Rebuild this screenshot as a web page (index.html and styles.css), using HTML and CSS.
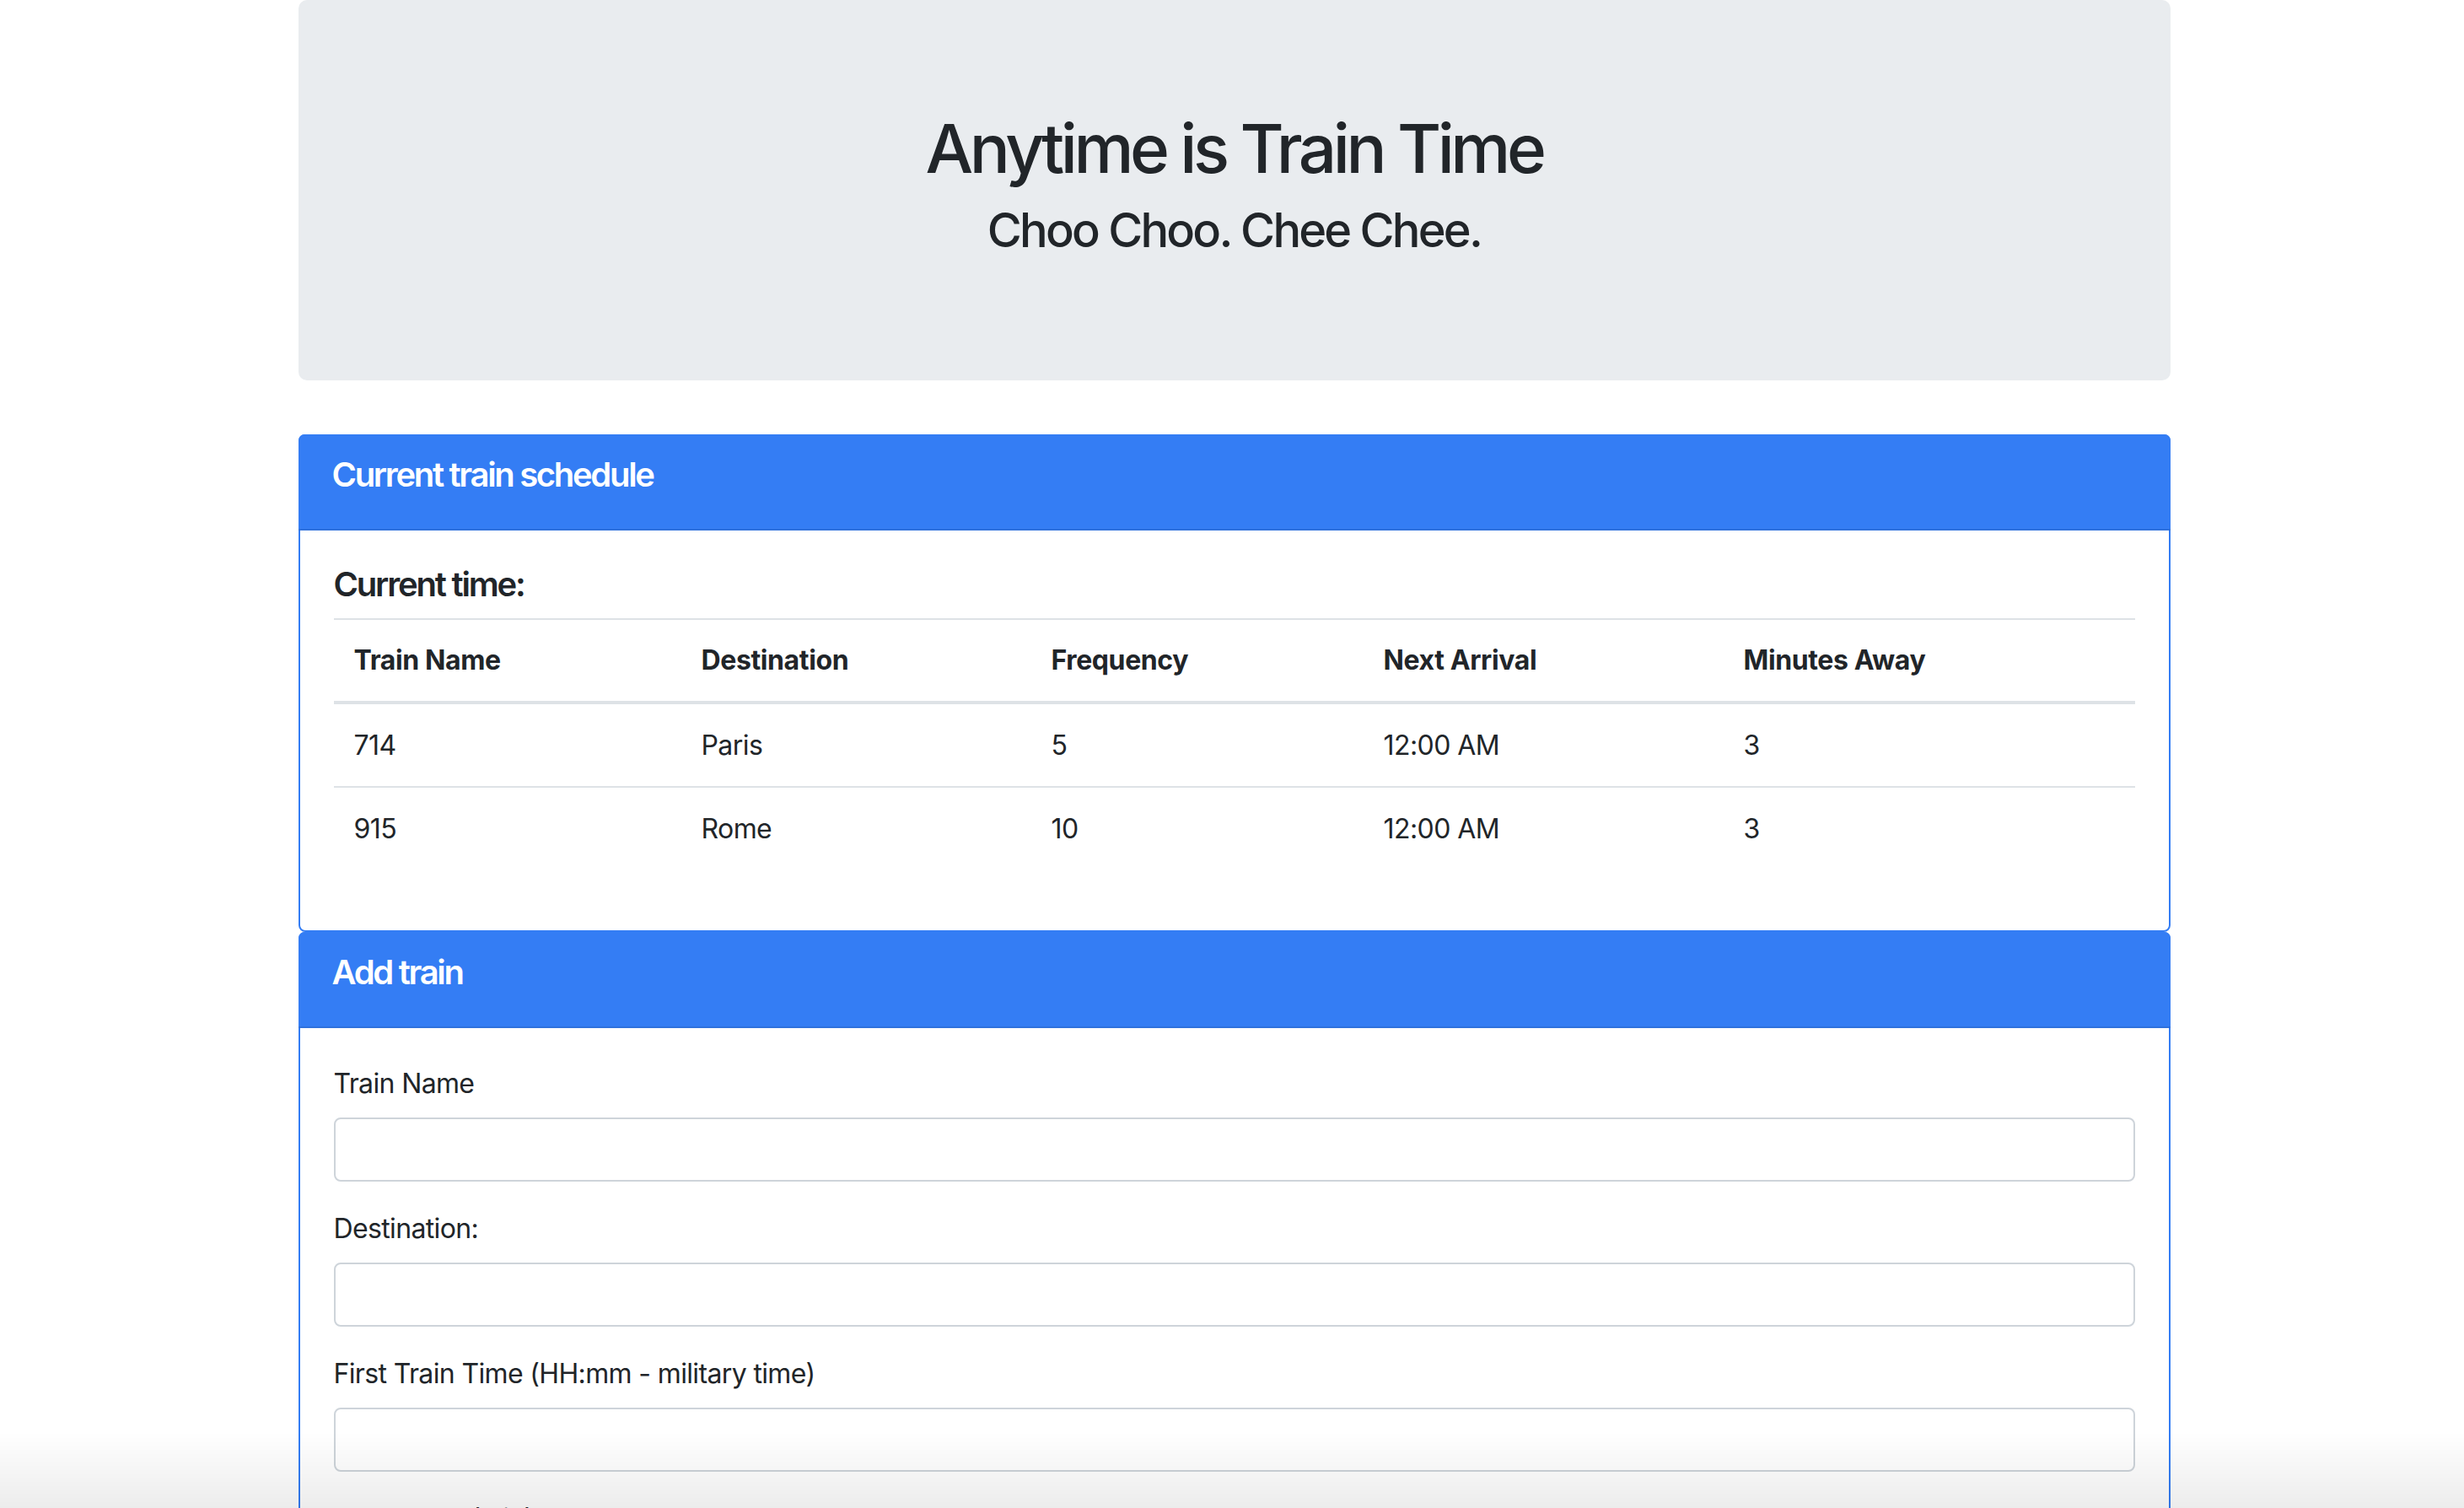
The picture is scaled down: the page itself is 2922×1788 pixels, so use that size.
FILE: index.html
```html
<!DOCTYPE html>
<html lang="en">
<head>
<meta charset="utf-8">
<title>Train Scheduler</title>
<link rel="stylesheet" href="styles.css">
</head>
<body>
<div class="container">
  <header class="jumbotron">
    <h1 class="title">Anytime is Train Time</h1>
    <h3 class="subtitle">Choo Choo. Chee Chee.</h3>
  </header>

  <section class="card">
    <div class="card-header"><h5 class="card-title">Current train schedule</h5></div>
    <div class="card-body">
      <h5 class="current-time">Current time:</h5>
      <table class="table">
        <thead>
          <tr>
            <th class="c1">Train Name</th>
            <th class="c2">Destination</th>
            <th class="c3">Frequency</th>
            <th class="c4">Next Arrival</th>
            <th class="c5">Minutes Away</th>
          </tr>
        </thead>
        <tbody>
          <tr><td>714</td><td>Paris</td><td>5</td><td>12:00 AM</td><td>3</td></tr>
          <tr><td>915</td><td>Rome</td><td>10</td><td>12:00 AM</td><td>3</td></tr>
        </tbody>
      </table>
    </div>
  </section>

  <section class="card">
    <div class="card-header"><h5 class="card-title">Add train</h5></div>
    <div class="card-body">
      <form class="form">
        <div class="form-group">
          <label class="form-label" for="train-name">Train Name</label>
          <input class="form-control" id="train-name" type="text">
        </div>
        <div class="form-group">
          <label class="form-label" for="destination">Destination:</label>
          <input class="form-control" id="destination" type="text">
        </div>
        <div class="form-group">
          <label class="form-label" for="first-time">First Train Time (HH:mm - military time)</label>
          <input class="form-control" id="first-time" type="text">
        </div>
        <div class="form-group">
          <label class="form-label" for="frequency">Frequency (min)</label>
          <input class="form-control" id="frequency" type="text">
        </div>
      </form>
    </div>
  </section>
</div>
<div class="screen-fade"></div>
</body>
</html>
```
FILE: styles.css
```css
* { box-sizing: border-box; }

html, body {
  margin: 0;
  background: #ffffff;
}

body {
  padding: 0 0 0 5px;
  font-family: Inter, "Liberation Sans", Arial, sans-serif;
  font-size: 32px;
  line-height: 1.5;
  letter-spacing: -0.018em;
  color: #212529;
}

.container {
  width: 2220px;
  margin: 0 auto;
}

.jumbotron {
  background: #e9ecef;
  border-radius: 10px;
  padding: 128px 64px;
  margin-bottom: 64px;
  text-align: center;
}

.title {
  margin: 0 0 16px;
  font-size: 80px;
  font-weight: 500;
  line-height: 1.2;
  letter-spacing: -0.056em;
}

.subtitle {
  margin: 0 0 16px;
  font-size: 56px;
  font-weight: 500;
  line-height: 1.2;
  letter-spacing: -0.05em;
}

.card {
  display: flex;
  flex-direction: column;
  border: 2px solid #347df4;
  border-radius: 8px;
  background: #ffffff;
}

.card-header {
  background: #347df4;
  color: #ffffff;
  padding: 24px 40px;
  margin: -2px -2px 0;
  border-bottom: 2px solid #2f71dc;
  border-radius: 7px 7px 0 0;
}

.card-title {
  margin: 0 0 16px;
  font-size: 40px;
  font-weight: 600;
  line-height: 1.2;
  letter-spacing: -0.058em;
}

.card-body {
  padding: 40px;
}

.current-time {
  margin: 0 0 16px;
  font-size: 40px;
  font-weight: 600;
  line-height: 1.2;
  letter-spacing: -0.055em;
}

.table {
  width: 100%;
  border-collapse: collapse;
  table-layout: fixed;
  margin-bottom: 32px;
}

.table th,
.table td {
  padding: 24px;
  text-align: left;
  vertical-align: top;
  border-top: 2px solid #dee2e6;
}

.table td {
  padding-top: 25px;
}

.table th {
  font-weight: 700;
  letter-spacing: -0.012em;
  vertical-align: bottom;
  border-bottom: 4px solid #dee2e6;
}

.c1 { width: 412px; }
.c2 { width: 415px; }
.c3 { width: 394px; }
.c4 { width: 427px; }

.form {
  margin: 0;
  padding-top: 2px;
}

.form-group {
  margin-bottom: 32px;
}

.form-label {
  display: inline-block;
  margin-bottom: 16px;
  letter-spacing: -0.02em;
}

.form-control {
  display: block;
  width: 100%;
  height: 76px;
  padding: 12px 24px;
  font: inherit;
  color: #495057;
  background: #ffffff;
  border: 2px solid #ced4da;
  border-radius: 8px;
}

.screen-fade {
  position: fixed;
  left: 0;
  right: 0;
  bottom: 0;
  height: 90px;
  background: linear-gradient(rgba(0, 0, 0, 0), rgba(0, 0, 0, 0.075));
  pointer-events: none;
}
```
